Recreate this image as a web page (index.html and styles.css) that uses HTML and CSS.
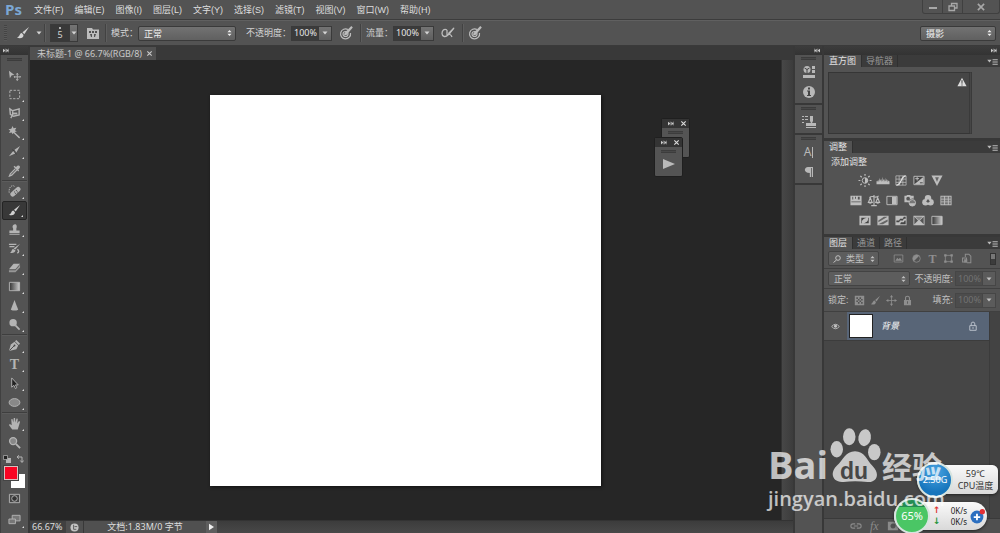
FILE: index.html
```html
<!DOCTYPE html>
<html lang="zh-CN">
<head>
<meta charset="utf-8">
<title>Photoshop</title>
<link rel="stylesheet" href="styles.css">
</head>
<body>
<svg class="defs" aria-hidden="true">
  <defs>
    <linearGradient id="g-h"><stop offset="0" stop-color="#333"/><stop offset="1" stop-color="#ccc"/></linearGradient>
    <symbol id="brush" viewBox="0 0 14 14"><path d="M13 1 6.500 6.300 8.300 8.200Z"/><path d="M5.800 7C3.500 7 4 10.500 1 11.500c3 1.500 6.500.5 6.500-2.600Z"/></symbol>
    <symbol id="ff" viewBox="0 0 8 6"><path d="M0 .5 3 3 0 5.500ZM4.500.5l3 2.500-3 2.500Z"/><path d="M3 .5v5M7.500.5v5" stroke="currentColor" stroke-width=".7"/></symbol>
    <symbol id="x" viewBox="0 0 8 8"><path d="m1.500 1.500 5 5m0-5-5 5" stroke="currentColor" stroke-width="1.300"/></symbol>
    <symbol id="down" viewBox="0 0 6 4"><path d="M.5.5h5L3 3.500Z"/></symbol>
    <symbol id="updown" viewBox="0 0 6 8"><path d="M.5 3 3 .5 5.500 3ZM.5 5h5L3 7.500Z"/></symbol>
    <symbol id="flymenu" viewBox="0 0 12 8"><path d="M0 2h5L2.500 5ZM6 1h6v1H6ZM6 3h6v1H6ZM6 5h6v1H6ZM6 7h6v1H6Z"/></symbol>
    <symbol id="pressure" viewBox="0 0 14 14"><g fill="none" stroke="currentColor" stroke-width="1.200"><path d="M9 3.500A5 5 0 1 0 11.500 7"/><circle cx="6.500" cy="8" r="2.500"/></g><path d="m13.800 1.500-1.500-1.500L5.500 7 5 9.500 7.500 9Z"/></symbol>
    <symbol id="airbrush" viewBox="0 0 14 14"><path d="M6 4C3 2 1 5 1 7.500S4 12 7 9l6-7M6 4v5c2-1 4-1 5 2" fill="none" stroke="currentColor" stroke-width="1.300"/><path d="m13.500 1-6 5.500L7 9l2-1Z"/></symbol>
    <symbol id="lock" viewBox="0 0 14 14"><path fill-rule="evenodd" d="M2.500 6.500h9V13h-9ZM6.500 8v3h1V8Z"/><path d="M4.500 7V4q0-2.500 2.500-2.500T9.500 4v3" fill="none" stroke="currentColor" stroke-width="1.400"/></symbol>
    <symbol id="frame" viewBox="0 0 14 14"><path d="M1 2h12v10H1Z"/></symbol>
    <symbol id="crossarrows" viewBox="0 0 14 14"><path d="M7 1v12M1 7h12" stroke="currentColor"/><path d="m7 0 2 3H5ZM7 14l2-3H5ZM0 7l3-2v4ZM14 7l-3-2v4Z"/></symbol>
  </defs>
</svg>

<div class="app">
  <header class="menubar">
    <span class="logo">Ps</span>
    <nav class="menus">
      <button>文件(F)</button><button>编辑(E)</button><button>图像(I)</button><button>图层(L)</button><button>文字(Y)</button><button>选择(S)</button><button>滤镜(T)</button><button>视图(V)</button><button>窗口(W)</button><button>帮助(H)</button>
    </nav>
    <div class="window-buttons">
      <button aria-label="最小化"><svg viewBox="0 0 10 10"><path d="M1 5h8v2H1Z"/></svg></button>
      <button aria-label="还原"><svg viewBox="0 0 10 10"><path d="M3.500 3.500V1.500h5.500v4.500H7M1 4h5.500v4.500H1Z" fill="none" stroke="currentColor" stroke-width="1.300"/></svg></button>
      <button class="wide" aria-label="关闭"><svg viewBox="0 0 8 8"><use href="#x"/></svg></button>
    </div>
  </header>

  <div class="options">
    <span class="grip-v"></span>
    <button class="preset" aria-label="画笔工具"><svg class="i16"><use href="#brush"/></svg><svg class="arrow"><use href="#down"/></svg></button>
    <span class="rule"></span>
    <button class="size"><span class="tip"><i></i>5</span><span class="drop"><svg class="arrow"><use href="#down"/></svg></span></button>
    <button class="icon-btn" aria-label="画笔面板"><svg class="i14" viewBox="0 0 14 14"><path fill-rule="evenodd" d="M1 2h5l1 1.500h6V13H1ZM3 5v2h2V5Zm3 0v2h2V5Zm3 0v2h2V5ZM4 8l1 3h1V8Zm4 0v3h1l1-3Z"/></svg></button>
    <span class="rule"></span>
    <label for="mode">模式：</label>
    <span class="select mode"><select id="mode"><option>正常</option></select><svg class="ud"><use href="#updown"/></svg></span>
    <label class="far" for="opacity">不透明度：</label>
    <span class="field"><input id="opacity" value="100%"><button class="drop" aria-label="不透明度滑块"><svg class="arrow"><use href="#down"/></svg></button></span>
    <button class="icon-btn wide" aria-label="压力控制不透明度"><svg class="i14"><use href="#pressure"/></svg></button>
    <span class="rule"></span>
    <label for="flow">流量：</label>
    <span class="field"><input id="flow" value="100%"><button class="drop" aria-label="流量滑块"><svg class="arrow"><use href="#down"/></svg></button></span>
    <button class="icon-btn wide" aria-label="喷枪"><svg class="i14"><use href="#airbrush"/></svg></button>
    <span class="rule"></span>
    <button class="icon-btn plain" aria-label="压力控制大小"><svg class="i14"><use href="#pressure"/></svg></button>
    <span class="select workspace"><select aria-label="工作区"><option>摄影</option></select><svg class="ud"><use href="#updown"/></svg></span>
  </div>

  <main class="work">
    <aside class="toolbox">
      <div class="strip left"><svg class="ff"><use href="#ff"/></svg></div>
      <div class="tools">
        <span class="grip"></span>
        <button class="solo" aria-label="移动"><svg viewBox="0 0 14 14"><path d="m1 2 6 4.500-3 .3L2 10Z"/><path d="M10 5v7M6.500 8.500h7M9 6l1-1.500L11 6M9 11l1 1.500 1-1.500M7.500 7.500 6.500 8.500l1 1M12.500 7.500l1 1-1 1" fill="none" stroke="currentColor"/></svg></button>
        <button aria-label="矩形选框"><svg viewBox="0 0 14 14"><path d="M2 2.500h10.500v9H2Z" fill="none" stroke="currentColor" stroke-dasharray="2.500 1.500"/></svg></button>
        <button aria-label="套索"><svg viewBox="0 0 14 14"><path d="m2 2 3 2 7-2v6.500L6 10 2.500 8ZM5 4v4.500L3 12" fill="none" stroke="currentColor" stroke-width="1.500"/><path d="M5 6h5v2H5Z"/></svg></button>
        <button aria-label="魔棒"><svg viewBox="0 0 14 14"><path d="m5 0 1 2.500L9 2 7.500 4.500 9.500 6 7 6.500 13 12l-1 1.500L6 7.500 5 9 4 7 1 7.500 2.500 5 .5 3.500 3.500 3Z"/></svg></button>
        <button aria-label="裁剪"><svg viewBox="0 0 14 14"><path d="m13 1-6 4 2 3ZM6 6l2.500 3L1 12Z"/><path d="m5 5 4 5" stroke="#333"/></svg></button>
        <button aria-label="吸管"><svg viewBox="0 0 14 14"><path d="M9 3c2-3 5-1 3.500 1.500L11 6l1 1-1 1-5-5 1-1 1 1Z"/><path d="M8 5 2.500 10.500 1.500 13 4 12l5.500-5.500" fill="none" stroke="currentColor" stroke-width="1.300"/></svg></button>
        <hr>
        <button aria-label="污点修复画笔"><svg viewBox="0 0 14 14"><rect x="1.500" y="4.800" width="13" height="5" rx="2.500" transform="rotate(-42 8 7.300)"/><path d="M7 1.500C4-1 0 3 1.500 9.500" fill="none" stroke="currentColor" stroke-dasharray="1.500 1"/><path d="M6.500 7.500h1M8.500 6h1M7.500 9h1M9.500 7.500h1" stroke="#444"/></svg></button>
        <button class="on" aria-label="画笔"><svg><use href="#brush"/></svg></button>
        <button aria-label="仿制图章"><svg viewBox="0 0 14 14"><path d="M5.500 6c-3-5 6-7 3.500 0v2h3.500v3H1.500V8h4ZM1.500 12h11v1h-11Z"/></svg></button>
        <button aria-label="历史记录画笔"><svg viewBox="0 0 14 14"><path d="M13 2 8 8 6 7ZM5.500 7.500 8 9c0 3-4 3.500-6 2.500 2 0 1.500-3.500 3.500-4Z"/><path d="M1 2.500h8M1.500 5H7M10 8c2 1 2 3 0 4" fill="none" stroke="currentColor" stroke-width="1.500"/></svg></button>
        <button aria-label="橡皮擦"><svg viewBox="0 0 14 14"><path d="M6 3h7l-5 6H1Z"/><path d="M13 4v3l-5 5H1v-2h7Z" opacity=".7"/></svg></button>
        <button aria-label="渐变"><svg viewBox="0 0 14 14"><path d="M1.500 2.500h11v9h-11Z" fill="url(#g-h)" stroke="currentColor"/></svg></button>
        <button aria-label="锐化"><svg viewBox="0 0 14 14"><path d="m7 1 4 10.500q-4 2-8 0Z"/></svg></button>
        <button aria-label="减淡"><svg viewBox="0 0 14 14"><circle cx="5.500" cy="5" r="4"/><path d="m8 8 4.500 4.500" stroke="currentColor" stroke-width="1.800"/></svg></button>
        <hr>
        <button aria-label="钢笔"><svg viewBox="0 0 14 14"><path d="m9 1 4 4-1.500 1.500-4-4ZM7 3l4 4-2 4-8 2 2-7Z"/><path d="m1.500 12.500 5-5" stroke="#444"/><circle cx="7" cy="7" r="1" fill="#444"/></svg></button>
        <button class="type" aria-label="文字">T</button>
        <button aria-label="路径选择"><svg viewBox="0 0 14 14"><path d="M4 1v10l2.300-2L8 12.500l1.500-1L8 8.500h3Z" fill="#222" stroke="currentColor"/></svg></button>
        <button aria-label="椭圆"><svg viewBox="0 0 14 14"><ellipse cx="7" cy="7" rx="5.800" ry="4.200" fill="#888" stroke="currentColor"/></svg></button>
        <hr>
        <button aria-label="抓手"><svg viewBox="0 0 14 14"><path d="M4.500 13.500 1 8.500l1-1L4 9 3.500 2.500l1.300-.3L5.700 6 6.200 1h1.400L8 6l1.200-4.300 1.300.3L10 7l1.800-2.800 1.200.8-2.500 8.500Z"/></svg></button>
        <button class="solo" aria-label="缩放"><svg viewBox="0 0 14 14"><circle cx="5.500" cy="5.500" r="3.800" fill="#888" stroke="currentColor" stroke-width="1.400"/><path d="M8.500 8.500 13 13" stroke="currentColor" stroke-width="2"/></svg></button>
        <div class="mini">
          <svg viewBox="0 0 8 8"><path d="M3 3h5v5H3Z"/><path d="M.5.5h4v4h-4Z" fill="#222" stroke="currentColor" stroke-width=".7"/></svg>
          <svg viewBox="0 0 8 8"><path d="M1 2h5v5M3 .3 1 2l2 1.700M4.300 5.500 6 7.500l1.700-2" fill="none" stroke="currentColor"/></svg>
        </div>
        <div class="swatches"><button class="bg" aria-label="背景色"></button><button class="fg" aria-label="前景色"></button></div>
        <button class="solo" aria-label="快速蒙版"><svg viewBox="0 0 14 14"><path d="M1.500 2.500h11v9h-11Z" fill="#444" stroke="currentColor"/><circle cx="7" cy="7" r="3" fill="#333" stroke="currentColor"/></svg></button>
        <button class="tall" aria-label="屏幕模式"><svg viewBox="0 0 14 14"><path d="M4.500 2.500h8.500v6H4.500Z" fill="#777" stroke="currentColor"/><path d="M1 6.500h7v5H1Z" fill="#777" stroke="currentColor"/></svg></button>
      </div>
    </aside>

    <section class="document">
      <div class="doc-tabs"><div class="doc-tab"><span>未标题-1 @ 66.7%(RGB/8)</span><button aria-label="关闭文档"><svg><use href="#x"/></svg></button></div></div>
      <div class="doc-body">
        <div class="stage"><div class="canvas"></div></div>
        <div class="scroll-v"></div>
      </div>
      <footer class="status">
        <span class="zoom">66.67%</span>
        <span class="share"><svg viewBox="0 0 10 10"><circle cx="5" cy="5" r="4.500"/><path d="M4 2v5h3M5 4h3" stroke="#555" fill="none"/></svg></span>
        <span class="info">文档:1.83M/0 字节</span>
        <button aria-label="状态菜单"><svg viewBox="0 0 6 8"><path d="m0 0 6 4-6 4Z"/></svg></button>
        <span class="scroll-h"></span>
      </footer>
    </section>

    <section class="docks">
      <div class="dock">
        <div class="strip"><svg class="ff flip"><use href="#ff"/></svg></div>
        <div class="dock-group"><span class="grip"></span>
          <button aria-label="属性"><svg viewBox="0 0 14 14"><circle cx="5" cy="4.500" r="3.500"/><path d="M5 8V4.500L2.500 3M5 4.500 7.500 3" stroke="#444" fill="none"/><path d="M10 1h3v3h-3ZM10 5h3v3h-3ZM1 10h12v3H1Z"/></svg></button>
          <button aria-label="信息"><svg viewBox="0 0 14 14"><circle cx="7" cy="7" r="6"/><path d="M6 2.500h2v2H6ZM5 5.500h3V10h1v1H5v-1h1V6.500H5Z" fill="#444"/></svg></button>
        </div>
        <div class="dock-group"><span class="grip"></span>
          <button aria-label="仿制源"><svg viewBox="0 0 14 14"><path d="M0 1h2v1H0ZM3 1h3v1H3ZM0 4h2v1H0ZM3 4h3v1H3ZM0 7h2v1H0ZM8 1h3v5l-1 2h4v3H4V8h5L8 6ZM4 12h10v1H4Z"/></svg></button>
        </div>
        <div class="dock-group"><span class="grip"></span>
          <button class="letter" aria-label="字符">A<i></i></button>
          <button aria-label="段落"><svg viewBox="0 0 14 14"><path d="M11 2v10H9.800V3H9v9H7.800V8C1 8 2 2 6 2Z"/></svg></button>
        </div>
        <div class="dock-rest"></div>
      </div>

      <div class="panels">
        <div class="strip right"><svg class="ff"><use href="#ff"/></svg></div>
        <section class="panel">
          <div class="tabs"><button class="active">直方图</button><button>导航器</button><svg class="fly"><use href="#flymenu"/></svg></div>
          <div class="histogram"><svg viewBox="0 0 12 12"><path fill-rule="evenodd" d="m6 1 5.500 10H.5ZM5.300 4l.2 4h1l.2-4ZM5.300 9v1.200h1.400V9Z"/></svg></div>
        </section>
        <section class="panel">
          <div class="tabs"><button class="active">调整</button><svg class="fly"><use href="#flymenu"/></svg></div>
          <div class="adjust">
            <p>添加调整</p>
            <div class="adj-row">
              <svg viewBox="0 0 14 14"><circle cx="7" cy="7" r="3" fill="none" stroke="currentColor"/><path d="M7 4a3 3 0 0 1 0 6Z"/><path d="M7 0v2M7 12v2M0 7h2M12 7h2M2 2l1.500 1.500M10.500 10.500 12 12M12 2l-1.500 1.500M2 12l1.500-1.500" stroke="currentColor" stroke-width="1.300"/></svg>
              <svg viewBox="0 0 14 14"><path d="M0 11V8l1-1v2l1-3v3l1.500-5v4L5 5v4l1.500-6v5L8 5v4l1.500-5v4L11 5v3l1-2v3l1-2 1 1v3Z"/></svg>
              <svg viewBox="0 0 14 14"><path d="M1.500 2h11v10h-11ZM1.500 5.500h11M1.500 9h11M5 2v10M9 2v10" fill="none" stroke="currentColor" stroke-width=".8"/><path d="M2 12c6 0 4-9 10-10" fill="none" stroke="#ddd" stroke-width="1.500"/></svg>
              <svg viewBox="0 0 14 14"><path d="M1.500 2.500h11v9h-11Z" fill="#444" stroke="currentColor"/><path d="M12 3v8H2Z"/><path d="M3 5h4M5 3v4" stroke="currentColor"/><path d="M8 9.500h3" stroke="#444"/></svg>
              <svg viewBox="0 0 14 14"><path d="M1 1.500h12L7 13Z"/><path d="M5 3.500h4L7 8.500Z" fill="#666"/></svg>
            </div>
            <div class="adj-row">
              <svg viewBox="0 0 14 14"><path fill-rule="evenodd" d="M1 2h12v10H1ZM3 3v3h1V3Zm3 0v2h1V3Zm3 0v3h2V3ZM2 8v1h10V8Z"/></svg>
              <svg viewBox="0 0 14 14"><path d="M7 1v11M4 12.500h6M2 4q2-2 5-1 3 1 5-1M3 4 1 9h4ZM11 4 9 9h4Z" fill="none" stroke="currentColor" stroke-width="1.200"/><path d="M0 9h6q-3 3-6 0ZM8 9h6q-3 3-6 0Z"/></svg>
              <svg viewBox="0 0 14 14"><path d="M1.500 2.500h11v9h-11Z" fill="#555" stroke="currentColor"/><path d="M7 3h5v8H7Z"/></svg>
              <svg viewBox="0 0 14 14"><path d="M1 2h2l1-1h3l1 1h3v3a4 4 0 0 0-5 4H1Z"/><circle cx="9.500" cy="9.500" r="3.500" fill="#777" stroke="currentColor"/><circle cx="5" cy="5" r="2" fill="#555"/><path d="M6.500 10h6a3 3 0 0 1-6 0Z"/></svg>
              <svg viewBox="0 0 14 14"><circle cx="7" cy="4.500" r="3.500"/><circle cx="4.300" cy="9" r="3.500"/><circle cx="9.700" cy="9" r="3.500"/><path d="M7 5.500 9 8 7 9.500 5 8Z" fill="#555"/></svg>
              <svg viewBox="0 0 14 14"><path fill-rule="evenodd" d="M1 2h12v10H1ZM2 3v2h3V3Zm4 0v2h3V3Zm4 0v2h2V3ZM2 6v2h3V6Zm4 0v2h3V6Zm4 0v2h2V6ZM2 9v2h3V9Zm4 0v2h3V9Zm4 0v2h2V9Z"/><path d="M2 3h10v8H2Z" opacity=".3"/></svg>
            </div>
            <div class="adj-row">
              <svg viewBox="0 0 14 14"><use href="#frame"/><path d="M3 4h6c-5 1-6 4-5 6H3ZM11 10H5c5-1 6-4 5-6h1Z" fill="#444"/></svg>
              <svg viewBox="0 0 14 14"><use href="#frame"/><path d="M2 7 8 3h4L2 9ZM2 11l10-5v2l-5 3Z" fill="#666"/></svg>
              <svg viewBox="0 0 14 14"><use href="#frame"/><path d="M2 7h3l1-2h3l1-2h2v2h-2L9 7H6L5 9H2ZM6 11l1-2h3l1-2h1v4Z" fill="#444"/></svg>
              <svg viewBox="0 0 14 14"><use href="#frame"/><path d="m2 3 4 4-4 4ZM12 3 8 7l4 4Z" fill="#555"/><path d="M3 3h8L7 7Z" fill="#888"/></svg>
              <svg viewBox="0 0 14 14"><path d="M1.500 2.500h11v9h-11Z" fill="url(#g-h)" stroke="currentColor"/></svg>
            </div>
          </div>
        </section>
        <section class="panel layers">
          <div class="tabs"><button class="active">图层</button><button>通道</button><button>路径</button><svg class="fly"><use href="#flymenu"/></svg></div>
          <div class="row filter">
            <span class="select kind"><svg class="search" viewBox="0 0 8 8"><circle cx="5" cy="3" r="2.300" fill="none" stroke="currentColor"/><path d="M3.500 5 .5 7.500" stroke="currentColor"/></svg><select aria-label="图层过滤"><option>类型</option></select><svg class="ud"><use href="#updown"/></svg></span>
            <div class="filter-icons">
              <button aria-label="像素"><svg viewBox="0 0 14 14"><path d="M1.500 2.500h11v9h-11Z" fill="none" stroke="currentColor"/><path d="m3 10 2.500-4L7 8l2-2 2.500 4Z"/></svg></button>
              <button aria-label="调整"><svg viewBox="0 0 14 14"><circle cx="7" cy="7" r="4.800" fill="none" stroke="currentColor"/><path d="M10.500 3.500A5 5 0 0 0 3.500 10.500Z"/></svg></button>
              <button class="type" aria-label="文字">T</button>
              <button aria-label="形状"><svg viewBox="0 0 14 14"><path d="M3 3h8v8H3Z" fill="none" stroke="currentColor"/><path d="M1.500 1.500h3v3h-3ZM9.500 1.500h3v3h-3ZM1.500 9.500h3v3h-3ZM9.500 9.500h3v3h-3Z"/></svg></button>
              <button aria-label="智能对象"><svg viewBox="0 0 14 14"><path d="M5.500 5V1.500H10L12.500 4v8.500h-5M2 6.500h5v5H2Z" fill="none" stroke="currentColor" stroke-width="1.300"/><path d="M4 8h4v4H4Z"/></svg></button>
            </div>
            <button class="toggle" aria-label="过滤开关"></button>
          </div>
          <div class="row blend">
            <span class="select grow"><select aria-label="混合模式"><option>正常</option></select><svg class="ud"><use href="#updown"/></svg></span>
            <label for="lo">不透明度:</label>
            <span class="field dim"><input id="lo" value="100%"><button class="drop" aria-label="图层不透明度"><svg class="arrow"><use href="#down"/></svg></button></span>
          </div>
          <div class="row locks">
            <span>锁定:</span>
            <div class="lock-icons">
              <button aria-label="锁定透明像素"><svg viewBox="0 0 14 14"><path fill-rule="evenodd" d="M1 1h12v12H1ZM3 3v2h2V3Zm4 0v2h2V3ZM5 5v2h2V5Zm4 0v2h2V5ZM3 7v2h2V7Zm4 0v2h2V7ZM5 9v2h2V9Zm4 0v2h2V9Z"/></svg></button>
              <button aria-label="锁定图像像素"><svg><use href="#brush"/></svg></button>
              <button aria-label="锁定位置"><svg><use href="#crossarrows"/></svg></button>
              <button aria-label="锁定全部"><svg><use href="#lock"/></svg></button>
            </div>
            <label for="fill">填充:</label>
            <span class="field dim"><input id="fill" value="100%"><button class="drop" aria-label="填充"><svg class="arrow"><use href="#down"/></svg></button></span>
          </div>
          <div class="layer-list">
            <div class="list">
              <div class="layer">
                <button class="eye" aria-label="可见性"><svg viewBox="0 0 14 10"><path d="M1 5q6-7 12 0-6 7-12 0Z" fill="none" stroke="currentColor" stroke-width="1.300"/><circle cx="7" cy="4.500" r="2.300"/></svg></button>
                <div class="layer-main"><span class="thumb"></span><em>背景</em><svg class="locked" viewBox="0 0 14 14"><path d="M2.500 6.500h9V13h-9ZM4.500 6.500V4q0-2.500 2.500-2.500T9.500 4v2.500M7 8.500v2.500" fill="none" stroke="currentColor" stroke-width="1.300"/></svg></div>
              </div>
            </div>
            <div class="scroll-v thin"></div>
          </div>
          <div class="layer-foot">
            <button aria-label="链接图层"><svg viewBox="0 0 14 14"><path d="M6 4.500H3.500a2.500 2.500 0 0 0 0 5H6M8 4.500h2.500a2.500 2.500 0 0 1 0 5H8M4.500 7h5" fill="none" stroke="currentColor" stroke-width="1.300"/></svg></button>
            <button class="fx">fx</button>
            <button aria-label="图层蒙版"><svg viewBox="0 0 14 14"><path fill-rule="evenodd" d="M1 2h12v10H1ZM7 4a3 3 0 1 0 .01 0Z"/></svg></button>
          </div>
        </section>
      </div>
    </section>
  </main>

  <div class="float back"><div class="float-head"><svg class="ff"><use href="#ff"/></svg><svg class="close"><use href="#x"/></svg></div><span class="grip"></span></div>
  <div class="float front"><div class="float-head"><svg class="ff"><use href="#ff"/></svg><svg class="close"><use href="#x"/></svg></div><span class="grip"></span><svg class="play" viewBox="0 0 12 10"><path d="m0 0 12 5-12 5Z"/></svg></div>

  <div class="widget cpu"><span class="ball blue">2.50G</span><div class="readout"><span>59℃</span><span>CPU温度</span></div></div>
  <div class="widget net"><span class="ball green">65%</span>
    <div class="speed"><span><b class="up">↑</b>0K/s</span><span><b class="dn">↓</b>0K/s</span></div>
    <svg class="plus" viewBox="0 0 14 14"><circle cx="6.500" cy="7.500" r="6" fill="#2c6fc0"/><path d="M6.500 4.500v6M3.500 7.500h6" stroke="#fff" stroke-width="1.700"/><circle cx="11.500" cy="2.500" r="2.500" fill="#e22f35"/></svg>
  </div>

  <div class="watermark">
    <div class="mark"><span class="bai">Bai</span>
      <span class="paw"><svg viewBox="0 0 54 58"><ellipse cx="7" cy="22" rx="6.500" ry="8.500"/><ellipse cx="20" cy="9" rx="6.500" ry="8.800"/><ellipse cx="36" cy="10" rx="6.500" ry="8.800" transform="rotate(10 36 10)"/><ellipse cx="46" cy="25" rx="6.500" ry="8.500"/><path d="M26 24c10 0 12 9 18 15 9 9 4 18-5 17-9-1-17-1-25 0-11 1-15-9-7-17 7-6 9-15 19-15Z"/></svg><span class="du">du</span></span>
      <span class="jy">经验</span></div>
    <div class="url">jingyan.baidu.com</div>
  </div>
</div>
</body>
</html>
```

FILE: styles.css
```css
* { box-sizing: border-box; }
html, body { height: 100%; }
body {
  margin: 0;
  overflow: hidden;
  background: #535353;
  color: #dedede;
  font: 9px/12px "Noto Sans", "Noto Sans CJK SC", sans-serif;
}
button, input, select {
  margin: 0;
  padding: 0;
  border: 0;
  background: none;
  color: inherit;
  font: inherit;
}
button { display: flex; align-items: center; justify-content: center; }
svg { display: block; fill: currentColor; flex: none; }
p { margin: 0; }
.defs { position: absolute; width: 0; height: 0; }
.app { position: relative; display: flex; flex-direction: column; height: 100vh; }

.menubar { display: flex; align-items: center; height: 20px; padding-left: 5px; border-bottom: 1px solid #3c3c3c; }
.logo { align-self: flex-start; width: 29px; color: #7ba7d4; font: bold 15px/18px "Open Sans", sans-serif; }
.menus { display: flex; gap: 11px; font-family: "Liberation Sans", "Noto Sans CJK SC", sans-serif; }
.window-buttons { display: flex; align-self: flex-start; margin-left: auto; height: 14px; border: 1px solid #404040; border-top: 0; border-radius: 0 0 3px 3px; color: #a8a8a8; }
.window-buttons button { width: 20px; border-right: 1px solid #404040; }
.window-buttons button.wide { width: 36px; border: 0; }
.window-buttons svg { width: 10px; height: 10px; }

.options { display: flex; align-items: center; height: 26px; padding: 0 4px; border-top: 1px solid #606060; border-bottom: 1px solid #3a3a3a; color: #d4d4d4; white-space: nowrap; }
.grip-v { width: 3px; height: 16px; margin-right: 8px; background: repeating-linear-gradient(#444 0 1px, #5a5a5a 1px 2px); }
.rule { width: 2px; height: 18px; margin-right: 4px; border-left: 1px solid #424242; border-right: 1px solid #5e5e5e; }
.preset { gap: 5px; width: 29px; justify-content: flex-start; }
.i16 { width: 16px; height: 14px; }
.i14 { width: 14px; height: 14px; }
.arrow { width: 6px; height: 4px; }
.size { height: 18px; border: 1px solid #3a3a3a; }
.tip { display: flex; flex-direction: column; align-items: center; width: 18px; height: 16px; background: #393939; line-height: 10px; }
.tip i { width: 2px; height: 2px; margin: 2px 0 1px; border-radius: 50%; background: #ddd; }
.drop { display: flex; align-items: center; justify-content: center; width: 13px; align-self: stretch; border-left: 1px solid #3a3a3a; background: linear-gradient(#747474, #5e5e5e); }
.size .drop { width: 8px; }
.icon-btn { width: 22px; color: #bcbcbc; }
.size + .icon-btn { margin: 0 1px 0 4px; }
.icon-btn.wide { width: 28px; }
.icon-btn.plain { width: 14px; }
.select { position: relative; display: flex; align-items: center; border: 1px solid #3a3a3a; border-radius: 2px; background: linear-gradient(#727272, #606060); }
.select select { width: 100%; height: 13px; padding-left: 5px; appearance: none; line-height: 13px; outline: 0; }
.ud { position: absolute; right: 3px; width: 5px; height: 8px; }
.mode { width: 98px; }
.far { margin-left: 10px; }
.options .select { height: 15px; color: #eee; }
.workspace { width: 76px; margin-left: auto; }
.field { display: flex; height: 15px; border: 1px solid #3a3a3a; background: #3b3b3b; }
.field input { width: 26px; padding-left: 2px; outline: 0; color: #e4e4e4; }

.work { display: flex; flex: 1; min-height: 0; background: #383838; }
.strip { display: flex; align-items: center; justify-content: flex-end; height: 9px; padding-right: 2px; background: linear-gradient(#3c3c3c, #333); }
.strip.left { justify-content: flex-start; padding-left: 3px; }
.strip.right { padding-right: 3px; }
.ff { width: 6px; height: 5px; color: #ccc; }
.flip { transform: scaleX(-1); }
.toolbox { display: flex; flex-direction: column; width: 28px; }
.tools { display: flex; flex: 1; flex-direction: column; padding: 3px 1px 0; border-left: 1px solid #404040; background: #535353; color: #b4b4b4; }
.grip { align-self: center; width: 15px; height: 3px; border: 1px solid #3c3c3c; border-width: 1px 0; background: #484848; }
.tools > .grip { margin-bottom: 5px; }
.tools > button { position: relative; flex: none; height: 19px; }
.tools > button svg { width: 13px; height: 13px; }
.tools > button::after { content: ""; position: absolute; right: 3px; bottom: 2px; border: 1px solid; border-color: transparent #ddd #ddd transparent; }
.tools > button.solo::after { display: none; }
.tools > button.on { border: 1px solid #242424; border-radius: 2px; background: #383838; color: #d0d0d0; }
.tools > button.tall { height: 22px; }
.tools hr { width: 100%; height: 2px; margin: 0; border: 0; border-top: 1px solid #3e3e3e; border-bottom: 1px solid #5c5c5c; }
.type { font: bold 14px/14px "Liberation Serif", serif; }
.mini { display: flex; justify-content: space-between; margin-top: 3px; padding: 0 3px 0 1px; }
.mini svg { width: 8px; height: 8px; }
.swatches { position: relative; height: 23px; margin: 2px 0 1px; }
.swatches button { position: absolute; width: 14px; height: 14px; }
.bg { right: 2px; bottom: 0; background: #fff; }
.swatches .fg { left: 2px; top: 1px; border: 1px solid #d8bebe; background: #f80422; box-shadow: 0 0 0 1px #444; }

.document { display: flex; flex: 1; flex-direction: column; min-width: 0; margin-left: 2px; }
.doc-tabs { display: flex; height: 14px; padding-top: 1px; background: #393939; }
.doc-tab { display: flex; align-items: center; gap: 4px; padding: 0 3px 0 7px; background: #505050; color: #c9c9c9; }
.doc-tab button svg { width: 7px; height: 7px; }
.doc-body { display: flex; flex: 1; min-height: 0; }
.stage { display: flex; flex: 1; align-items: center; justify-content: center; background: #262626; }
.canvas { height: 85%; aspect-ratio: 1; background: #fff; box-shadow: 1px 1px 3px #111; }
.scroll-v { width: 12px; border-left: 1px solid #333; background: linear-gradient(90deg, #474747, #3c3c3c); }
.status { display: flex; height: 13px; border-top: 1px solid #333; background: #404040; color: #ddd; line-height: 11px; }
.zoom { width: 36px; padding-left: 2px; }
.share { display: flex; align-items: center; justify-content: center; width: 17px; background: #505050; color: #c2c2c2; }
.share svg { width: 9px; height: 9px; }
.info { width: 123px; border-left: 1px solid #383838; background: #505050; text-align: center; }
.status button { width: 11px; background: #5e5e5e; color: #eee; }
.status button svg { width: 5px; height: 8px; }
.scroll-h { flex: 1; background: linear-gradient(#3c3c3c, #484848); }

.docks { display: flex; margin-left: 2px; }
.dock { display: flex; flex-direction: column; width: 27px; color: #b8b8b8; }
.dock-group { display: flex; flex-direction: column; align-items: center; margin-bottom: 2px; padding: 2px 0 1px; background: #535353; }
.dock-group .grip { margin-bottom: 2px; }
.dock-group button { width: 20px; height: 20px; }
.dock-group svg { width: 14px; height: 14px; }
.dock-group .letter { font: 12px/14px "Noto Sans", sans-serif; }
.letter i { width: 1px; height: 11px; margin-left: 1px; background: currentColor; }
.dock-rest { flex: 1; background: #535353; }

.panels { display: flex; flex-direction: column; width: 178px; padding-left: 2px; }
.panel { margin-bottom: 3px; background: #535353; }
.tabs { display: flex; height: 12px; background: #3b3b3b; color: #989898; line-height: 12px; }
.tabs button { padding: 0 4px; border-right: 1px solid #303030; }
.tabs .active { padding: 0 5px; background: #535353; color: #e2e2e2; }
.fly { width: 11px; height: 7px; margin: 3px 2px 0 auto; color: #bbb; }
.histogram { display: flex; justify-content: flex-end; height: 62px; margin: 5px 28px 0 4px; padding: 4px 2px; border: 1px solid #363636; border-right: 3px double #3a3a3a; background: #464646; color: #ddd; }
.histogram svg { width: 10px; height: 10px; }
.panel:nth-of-type(1) { padding-bottom: 4px; }
.adjust { padding: 3px 29px 7px 7px; color: #e0e0e0; }
.adj-row { display: flex; justify-content: center; gap: 4px; margin-top: 7px; color: #bebebe; }
.adj-row svg { width: 14px; height: 13px; }
.adjust p + .adj-row { margin-top: 6px; }
.layers { display: flex; flex: 1; flex-direction: column; min-height: 0; margin: 0; }
.row { display: flex; align-items: center; flex: none; height: 20px; padding: 0 4px; border-bottom: 1px solid #404040; color: #c0c0c0; white-space: nowrap; }
.row .select { height: 15px; background: #5d5d5d; border-color: #434343; }
.kind { width: 51px; padding-left: 4px; }
.search { width: 8px; height: 8px; }
.filter-icons { display: flex; flex: 1; justify-content: space-between; margin: 0 18px 0 14px; color: #8e8e8e; }
.row button svg { width: 11px; height: 11px; }
.filter-icons .type { font-size: 12px; }
.toggle { width: 6px; height: 12px; border: 1px solid #333; background: linear-gradient(#777 50%, #3c3c3c 50%); }
.grow { flex: 1; }
.blend label, .locks label { margin: 0 2px 0 5px; }
.dim { border-color: #464646; background: #4c4c4c; }
.dim input { color: #727272; }
.row .field .arrow { width: 6px; height: 4px; }
.row .field .drop { background: #5b5b5b; border-color: #464646; }
.locks { height: 23px; }
.lock-icons { display: flex; gap: 5px; margin: 0 auto 0 6px; color: #8e8e8e; }
.layer-list { display: flex; flex: 1; min-height: 0; background: #464646; }
.list { flex: 1; }
.thin { width: 11px; background: #434343; border-left-color: #3b3b3b; }
.layer { display: flex; height: 29px; border-bottom: 1px solid #3c3c3c; background: #535353; }
.eye { width: 23px; color: #c4c4c4; }
.eye svg { width: 9px; height: 7px; }
.layer-main { display: flex; flex: 1; align-items: center; padding: 0 11px 0 2px; background: #586577; color: #f2f2f2; }
.thumb { width: 24px; height: 24px; margin-right: 8px; border: 1px solid #222; background: #fff; }
.locked { width: 10px; height: 10px; margin-left: auto; color: #bfc6cf; }
.layer-foot { display: flex; align-items: center; gap: 8px; height: 15px; padding-left: 26px; border-top: 1px solid #3a3a3a; background: #505050; color: #8a8a8a; }
.layer-foot svg { width: 12px; height: 12px; }
.fx { font: italic 12px/12px "Liberation Serif", serif; }

.float { position: absolute; display: flex; flex-direction: column; width: 29px; height: 40px; border: 1px solid #1f1f1f; border-radius: 2px; background: #545454; }
.back { left: 661px; top: 118px; }
.front { left: 654px; top: 137px; }
.float-head { display: flex; align-items: center; justify-content: space-between; height: 9px; margin-bottom: 3px; padding: 0 2px 0 6px; background: #343434; }
.close { width: 7px; height: 7px; color: #ddd; }
.play { width: 12px; height: 10px; margin: 6px auto 0; color: #bababa; }

.widget { position: absolute; display: flex; align-items: center; background: linear-gradient(#fafafa, #d9d9d9); color: #333; box-shadow: 0 1px 3px #222; }
.ball { display: flex; flex: none; align-items: center; justify-content: center; width: 36px; height: 36px; margin: -4px 0; border: 2px solid #d7e4df; border-radius: 50%; color: #fff; }
.cpu { right: 2px; bottom: 39px; width: 81px; height: 29px; border-radius: 18px 7px 7px 18px; }
.blue { background: radial-gradient(circle at 50% 25%, #4aa4e2, #1675bc 70%); }
.readout { display: flex; flex: 1; flex-direction: column; align-items: center; }
.net { right: 13px; bottom: 3px; width: 93px; height: 28px; border-radius: 18px; }
.green { background: linear-gradient(#248c52 22%, #4ac665 23%); font-size: 11px; }
.speed { flex: 1; padding-left: 3px; color: #222; font: 8px/11px "Noto Sans", sans-serif; }
.speed span { display: flex; justify-content: space-between; }
.speed b { font: bold 9px/11px "DejaVu Sans", sans-serif; }
.up { color: #d33; }
.dn { color: #27963c; }
.plus { width: 15px; height: 15px; margin: 0 2px 0 3px; }

.watermark { position: absolute; right: 54px; bottom: 21px; width: 178px; color: #fff; opacity: .7; }
.mark { display: flex; align-items: flex-end; height: 57px; }
.bai { width: 62px; padding-bottom: 3px; font: bold 38px/34px "Open Sans", sans-serif; }
.paw { position: relative; width: 52px; height: 56px; }
.paw svg { width: 52px; height: 56px; }
.du { position: absolute; left: 10px; bottom: 0; color: #484848; font: bold 23px/25px "Liberation Sans", sans-serif; }
.jy { padding-bottom: 3px; font: bold 30px/32px "Noto Sans CJK SC", sans-serif; white-space: nowrap; }
.url { height: 26px; margin-top: 2px; font: 600 20px/26px "Open Sans", sans-serif; white-space: nowrap; }
```
